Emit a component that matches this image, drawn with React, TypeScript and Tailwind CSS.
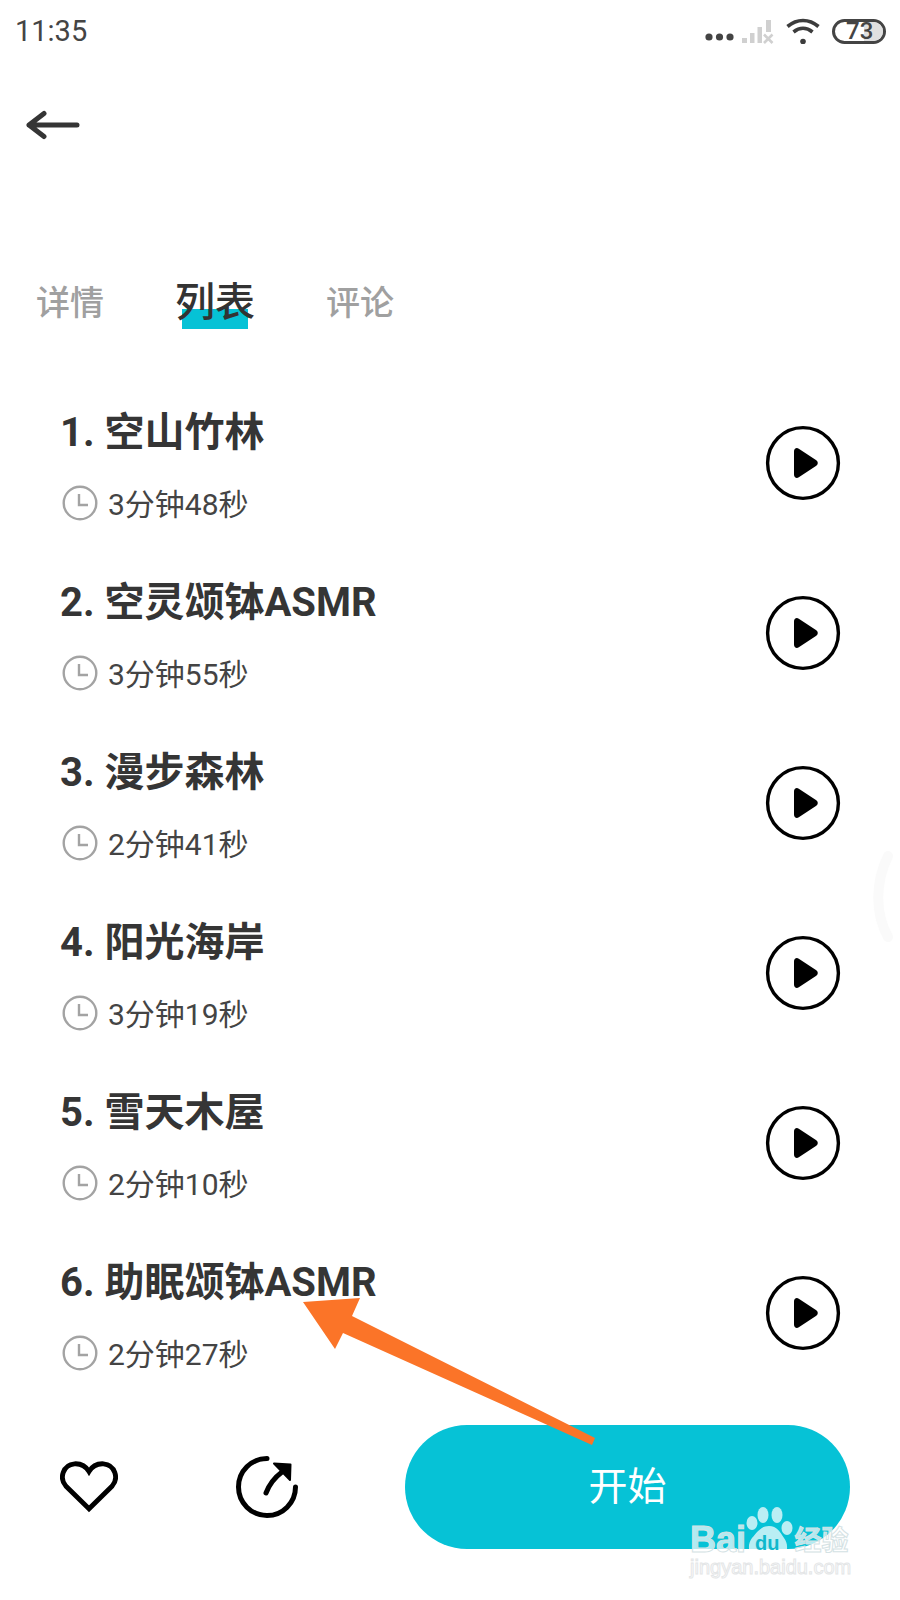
import React from 'react';

const tracks = [
  { title: '1. 空山竹林', time: '3分钟48秒' },
  { title: '2. 空灵颂钵ASMR', time: '3分钟55秒' },
  { title: '3. 漫步森林', time: '2分钟41秒' },
  { title: '4. 阳光海岸', time: '3分钟19秒' },
  { title: '5. 雪天木屋', time: '2分钟10秒' },
  { title: '6. 助眠颂钵ASMR', time: '2分钟27秒' },
];

const font = "font-['Roboto','Noto_Sans_CJK_SC',sans-serif]";

function StatusIcons() {
  return (
    <div className="flex items-center">
      {/* dots */}
      <svg width="30" height="12" viewBox="0 0 30 12" className="mt-[12px]">
        <circle cx="5" cy="6" r="3.6" fill="#444" />
        <circle cx="15.500" cy="6" r="3.6" fill="#444" />
        <circle cx="26" cy="6" r="3.6" fill="#444" />
      </svg>
      {/* signal */}
      <svg width="34" height="26" viewBox="0 0 34 26" className="ml-[7px] mt-[2px]">
        <rect x="1" y="19" width="5" height="5" fill="#d0d0d0" />
        <rect x="9" y="14" width="4.500" height="10" fill="#d0d0d0" />
        <rect x="16.500" y="8" width="4.500" height="16" fill="#d0d0d0" />
        <rect x="25" y="1" width="5" height="12" fill="#d0d0d0" />
        <path d="M23 15.500l8.500 8.500M31.500 15.500L23 24" stroke="#d0d0d0" strokeWidth="2.6" />
      </svg>
      {/* wifi */}
      <svg width="34" height="26" viewBox="0 0 34 26" className="ml-[11px]">
        <path d="M1.500 8.500C11 .5 23 .5 32.500 8.500" fill="none" stroke="#3c3c3c" strokeWidth="3.6" />
        <path d="M7.500 14c6-5 13-5 19 0" fill="none" stroke="#3c3c3c" strokeWidth="3.6" />
        <circle cx="17" cy="23.500" r="2.8" fill="#3c3c3c" />
      </svg>
      {/* battery */}
      <div className="relative ml-[12px] flex h-[25px] w-[54px] items-center overflow-hidden rounded-full border-[3px] border-[#444] bg-white pl-[11px]">
        <div className="absolute inset-y-0 right-0 w-[19px] bg-[#e0e0e0]" />
        <span className={`${font} relative text-[24px] leading-none font-medium text-[#444]`}>73</span>
      </div>
    </div>
  );
}

function ClockIcon() {
  return (
    <svg width="36" height="36" viewBox="0 0 36 36" className="mt-[2px] shrink-0">
      <circle cx="18" cy="18" r="16.3" fill="none" stroke="#a3a3a3" strokeWidth="2.4" />
      <path d="M17 9v11h9" fill="none" stroke="#a3a3a3" strokeWidth="2.4" />
    </svg>
  );
}

function PlayIcon() {
  return (
    <svg width="76" height="76" viewBox="0 0 76 76" className="shrink-0">
      <circle cx="38" cy="38" r="35.400" fill="none" stroke="#000" strokeWidth="3.4" />
      <path d="M29 26.500v23c0 3 2.500 4.300 4.800 2.800l17.500-11.500c2-1.300 2-4.300 0-5.600L33.800 23.700C31.500 22.200 29 23.500 29 26.500z" fill="#000" />
    </svg>
  );
}

function TrackRow({ title, time }: { title: string; time: string }) {
  return (
    <div className="flex h-[170px] items-center justify-between pl-[60px] pr-[59px]">
      <div className="mt-[9px] flex flex-col">
        <div className={`${font} text-[40px] leading-[50px] font-bold text-[#353535]`}>{title}</div>
        <div className="mt-[25px] flex h-[44px] items-start gap-[10px] pl-[2px]">
          <ClockIcon />
          <span className={`${font} text-[30px] leading-[44px] text-[#444]`}>{time}</span>
        </div>
      </div>
      <PlayIcon />
    </div>
  );
}

export default function App() {
  return (
    <div className={`${font} relative flex h-[1600px] w-[900px] flex-col overflow-hidden bg-white`}>
      {/* Status bar */}
      <div className="flex h-[62px] items-center justify-between pl-[15px] pr-[14px]">
        <span className="text-[29px] leading-none text-[#444]">11:35</span>
        <StatusIcons />
      </div>

      {/* Back */}
      <div className="flex h-[126px] items-center pl-[26px]">
        <svg width="54" height="30" viewBox="0 0 54 30">
          <path d="M3 15H51M18 3.500L3 15 18 26.500" fill="none" stroke="#353535" strokeWidth="5" strokeLinecap="round" strokeLinejoin="round" />
        </svg>
      </div>

      {/* Tabs */}
      <div className="mt-[80px] flex h-[70px] items-center pl-[36px]">
        <span className="text-[34px] leading-none font-medium text-[#a0a0a0]">详情</span>
        <div className="relative ml-[72px] flex h-[50px] w-[78px] items-center justify-center">
          <div className="absolute bottom-[-1px] left-[6px] h-[20px] w-[66px] bg-[#06c2d6]" />
          <span className="relative text-[40px] leading-none font-medium whitespace-nowrap text-[#333]">列表</span>
        </div>
        <span className="ml-[72px] text-[34px] leading-none font-medium text-[#a0a0a0]">评论</span>
      </div>

      {/* List */}
      <div className="mt-[40px] flex flex-col">
        {tracks.map(t => (
          <TrackRow key={t.title} title={t.title} time={t.time} />
        ))}
      </div>

      {/* Bottom bar */}
      <div className="mt-[27px] flex items-center pl-[60px]">
        <svg width="58" height="54" viewBox="0 0 60 54" className="shrink-0">
          <path d="M30 49.500L6 26C-1 18 3 4 15 3c7-.4 12 3 15 8 3-5 8-8.400 15-8 12 1 16 15 9 23z" fill="none" stroke="#000" strokeWidth="5" />
        </svg>
        <svg width="64" height="64" viewBox="0 0 64 64" className="ml-[117px] shrink-0">
          <path d="M32 3.500A28.500 28.500 0 1 0 60.500 32" fill="none" stroke="#000" strokeWidth="5" strokeLinecap="round" />
          <path d="M31 38c3-8 8-15 16-21" fill="none" stroke="#000" strokeWidth="5" strokeLinecap="round" />
          <path d="M39 8.500L55.500 9.500 55 25z" fill="#000" stroke="#000" strokeWidth="2" strokeLinejoin="round" />
        </svg>
        <div className="ml-[106px] flex h-[124px] w-[445px] items-center justify-center rounded-full bg-[#06c2d6]">
          <span className="text-[39px] leading-none text-white">开始</span>
        </div>
      </div>

      {/* Annotation arrow */}
      <svg width="900" height="1600" viewBox="0 0 900 1600" className="pointer-events-none absolute top-0 left-0">
        <path d="M303 1302L360 1298 352 1316 595 1438 592 1445 343 1333 335 1349z" fill="#fb7428" />
      </svg>

      {/* Faint edge handle */}
      <svg width="30" height="100" viewBox="0 0 30 100" className="pointer-events-none absolute top-[848px] left-[870px]">
        <path d="M18 8C5 35 5 65 18 89" fill="none" stroke="#fafafa" strokeWidth="10" strokeLinecap="round" />
      </svg>

      {/* Watermark */}
      <div className="pointer-events-none absolute top-[1502px] left-[690px] w-[170px]">
        <svg width="56" height="58" viewBox="0 0 56 58" className="absolute top-0 left-[52px]">
          <g fill="#fff" fillOpacity="0.72">
            <ellipse cx="10" cy="21" rx="5.500" ry="7" />
            <ellipse cx="21" cy="13" rx="5.500" ry="8" />
            <ellipse cx="35" cy="13" rx="5.500" ry="8" />
            <ellipse cx="45" cy="26" rx="5.500" ry="7" />
            <path d="M27 24c8 0 11 6 15 12 5 6 5 20-8 20-3 0-5-1-8-1-3 0-5 1-8 1-13 0-13-14-8-20 5-6 9-12 17-12z" />
          </g>
        </svg>
        <div className="relative flex h-[53px] items-end">
          <span className="font-['Liberation_Sans',sans-serif] text-[36px] leading-[30px] font-bold text-white/70 [-webkit-text-stroke:1px_#d4e2e4]">Bai</span>
          <span className="mb-[2px] ml-[9px] font-['Liberation_Sans',sans-serif] text-[20px] leading-[20px] font-bold text-[#10b8cc]">du</span>
          <span className="ml-[15px] text-[27px] leading-[27px] font-bold whitespace-nowrap text-white/70 [-webkit-text-stroke:1px_#d4e2e4]">经验</span>
        </div>
        <div className="font-['Liberation_Sans',sans-serif] text-[20px] leading-[24px] whitespace-nowrap text-white [-webkit-text-stroke:1px_#e4e6e7]">jingyan.baidu.com</div>
      </div>
    </div>
  );
}
